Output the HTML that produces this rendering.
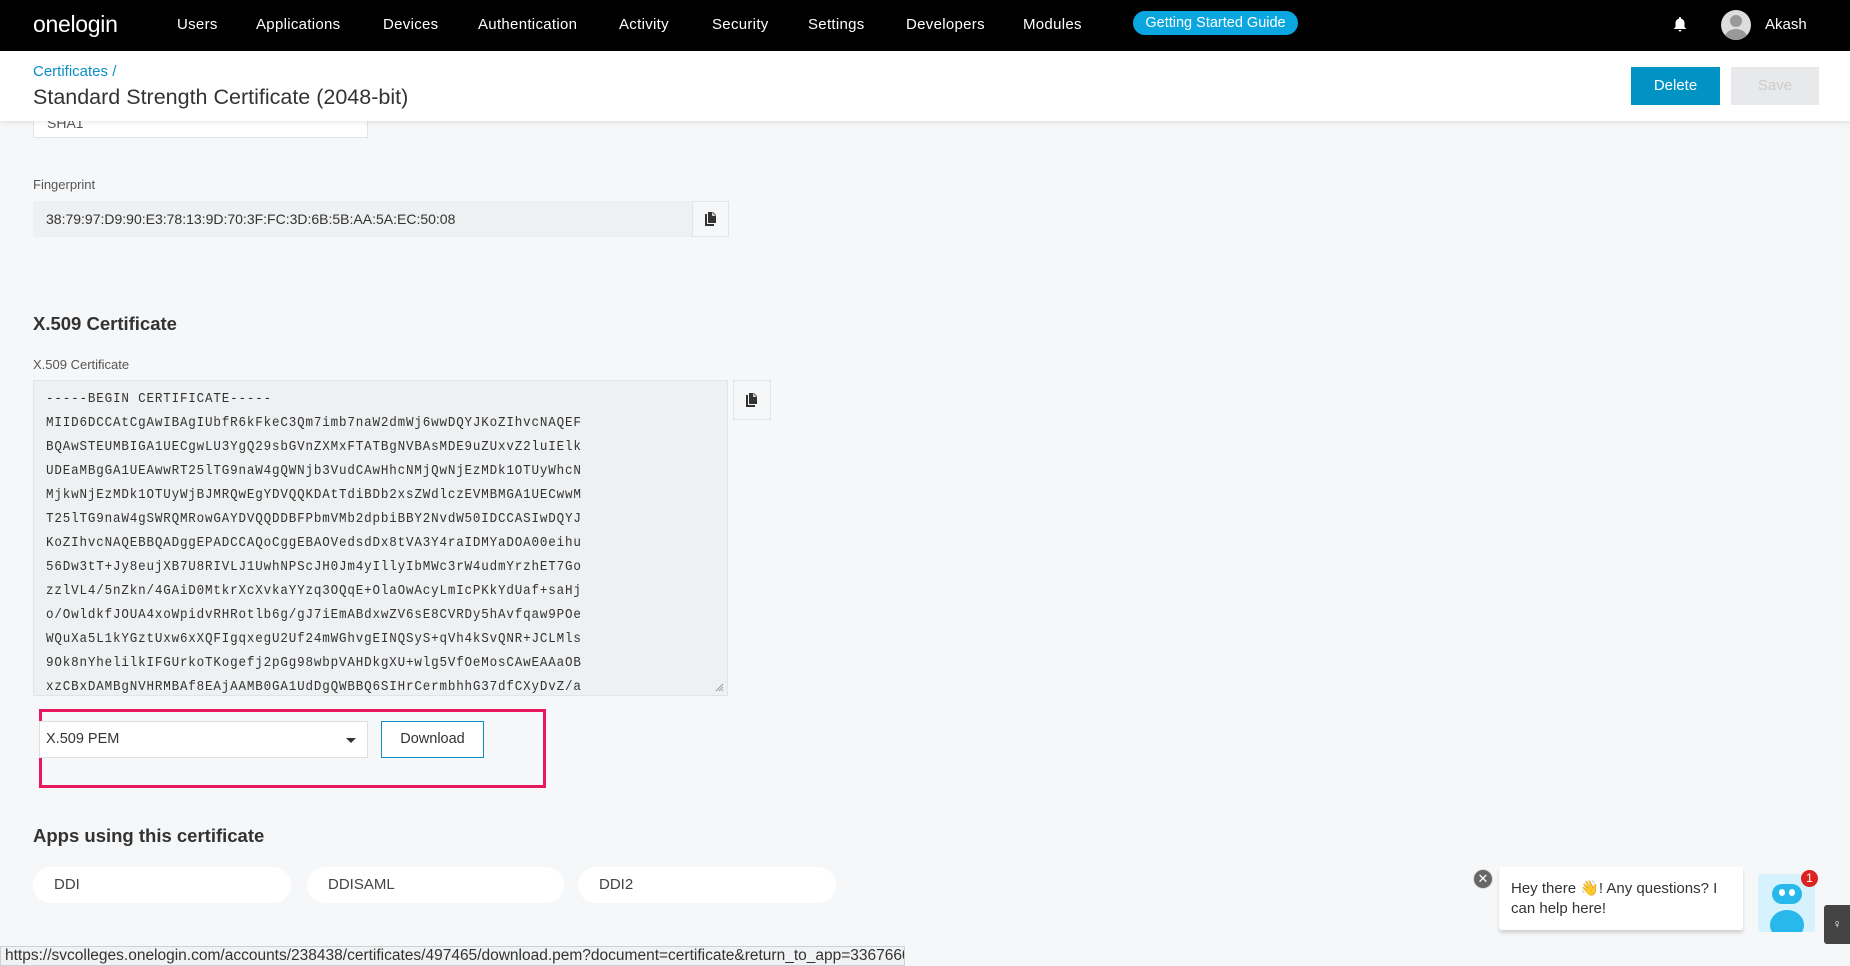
<!DOCTYPE html>
<html><head><meta charset="utf-8"><style>
*{box-sizing:border-box;margin:0;padding:0}
body{width:1850px;height:966px;overflow:hidden;background:#f6f7f8;font-family:"Liberation Sans",sans-serif;position:relative;color:#333}
.a{position:absolute}
.nav{left:0;top:0;width:1850px;height:51px;background:#000}
.nav span.n{position:absolute;top:16px;color:#fff;font-size:15px;letter-spacing:0.3px}
.hdr{left:0;top:51px;width:1850px;height:70px;background:#fff;box-shadow:0 2px 4px rgba(0,0,0,.08)}
.lines div{height:24px;line-height:24px;white-space:pre}
.btnc{background:#f6f7f8;border:1px solid #e2e4e6;display:flex;align-items:center;justify-content:center}
.pill{background:#fff;border-radius:18px;height:36px;line-height:36px;padding-left:21px;font-size:15px;color:#444}
</style></head><body>
<div class="a" style="left:33px;top:104px;width:335px;height:34px;background:#fff;border:1px solid #e2e4e6;font-size:14px;padding:10px 13px;color:#555;overflow:hidden">SHA1</div>
<div class="a nav">
<div class="a" style="left:33px;top:11px;color:#fff;font-size:23px;letter-spacing:-0.3px">onelogin</div>
<span class="n" style="left:177px">Users</span>
<span class="n" style="left:256px">Applications</span>
<span class="n" style="left:383px">Devices</span>
<span class="n" style="left:478px">Authentication</span>
<span class="n" style="left:619px">Activity</span>
<span class="n" style="left:712px">Security</span>
<span class="n" style="left:808px">Settings</span>
<span class="n" style="left:906px">Developers</span>
<span class="n" style="left:1023px">Modules</span>
<div class="a" style="left:1133px;top:11px;width:165px;height:24px;border-radius:12px;background:#0aa6e0;color:#fff;font-size:14.5px;line-height:24px;text-align:center">Getting Started Guide</div>
<svg class="a" style="left:1673px;top:16px" width="14" height="17" viewBox="0 0 14 17"><path d="M7 1c-.6 0-1 .4-1 1v.6C3.8 3.1 2.5 5 2.5 7v4L1 12.5V13h12v-.5L11.5 11V7c0-2-1.3-3.9-3.5-4.4V2c0-.6-.4-1-1-1zM5.5 14a1.5 1.5 0 003 0z" fill="#fff"/></svg>
<div class="a" style="left:1721px;top:10px;width:30px;height:30px;border-radius:50%;background:#ddd;overflow:hidden"><div class="a" style="left:9px;top:5px;width:12px;height:12px;border-radius:50%;background:#999"></div><div class="a" style="left:4px;top:19px;width:22px;height:16px;border-radius:50%;background:#999"></div></div>
<div class="a" style="left:1765px;top:16px;color:#fff;font-size:15px">Akash</div>
</div>
<div class="a hdr">
<div class="a" style="left:33px;top:12px;color:#0a8fc6;font-size:15px">Certificates /</div>
<div class="a" style="left:33px;top:34px;color:#333;font-size:21.5px">Standard Strength Certificate (2048-bit)</div>
<div class="a" style="left:1631px;top:16px;width:89px;height:38px;background:#0093c4;color:#fff;font-size:15px;line-height:38px;text-align:center">Delete</div>
<div class="a" style="left:1731px;top:16px;width:88px;height:38px;background:#e8e9ea;color:#ccc;font-size:15px;line-height:38px;text-align:center">Save</div>
</div>
<div class="a" style="left:33px;top:177px;font-size:13px;color:#555">Fingerprint</div>
<div class="a" style="left:33px;top:201px;width:659px;height:36px;background:#eef0f1;font-size:14px;line-height:36px;padding-left:13px;color:#333">38:79:97:D9:90:E3:78:13:9D:70:3F:FC:3D:6B:5B:AA:5A:EC:50:08</div>
<div class="a btnc" style="left:692px;top:201px;width:37px;height:36px">
<svg width="14" height="16" viewBox="0 0 14 16"><path d="M1 3h2v10h7v2H1z M4 1h5l3 3v8H4z" fill="#333"/><path d="M8 1v4h4" fill="#ccc"/></svg></div>
<div class="a" style="left:33px;top:313px;font-size:18.5px;font-weight:bold;color:#333">X.509 Certificate</div>
<div class="a" style="left:33px;top:357px;font-size:13px;color:#555">X.509 Certificate</div>
<div class="a" style="left:33px;top:380px;width:695px;height:316px;background:#eef0f1;border:1px solid #e2e4e6;overflow:hidden">
<div class="lines" style="position:absolute;left:12px;top:7px;font-family:'Liberation Mono',monospace;font-size:13.5px;letter-spacing:0.9px;color:#333;transform:scaleX(0.93);transform-origin:left">
<div>-----BEGIN CERTIFICATE-----</div>
<div>MIID6DCCAtCgAwIBAgIUbfR6kFkeC3Qm7imb7naW2dmWj6wwDQYJKoZIhvcNAQEF</div>
<div>BQAwSTEUMBIGA1UECgwLU3YgQ29sbGVnZXMxFTATBgNVBAsMDE9uZUxvZ2luIElk</div>
<div>UDEaMBgGA1UEAwwRT25lTG9naW4gQWNjb3VudCAwHhcNMjQwNjEzMDk1OTUyWhcN</div>
<div>MjkwNjEzMDk1OTUyWjBJMRQwEgYDVQQKDAtTdiBDb2xsZWdlczEVMBMGA1UECwwM</div>
<div>T25lTG9naW4gSWRQMRowGAYDVQQDDBFPbmVMb2dpbiBBY2NvdW50IDCCASIwDQYJ</div>
<div>KoZIhvcNAQEBBQADggEPADCCAQoCggEBAOVedsdDx8tVA3Y4raIDMYaDOA00eihu</div>
<div>56Dw3tT+Jy8eujXB7U8RIVLJ1UwhNPScJH0Jm4yIllyIbMWc3rW4udmYrzhET7Go</div>
<div>zzlVL4/5nZkn/4GAiD0MtkrXcXvkaYYzq3OQqE+OlaOwAcyLmIcPKkYdUaf+saHj</div>
<div>o/OwldkfJOUA4xoWpidvRHRotlb6g/gJ7iEmABdxwZV6sE8CVRDy5hAvfqaw9POe</div>
<div>WQuXa5L1kYGztUxw6xXQFIgqxegU2Uf24mWGhvgEINQSyS+qVh4kSvQNR+JCLMls</div>
<div>9Ok8nYhelilkIFGUrkoTKogefj2pGg98wbpVAHDkgXU+wlg5VfOeMosCAwEAAaOB</div>
<div>xzCBxDAMBgNVHRMBAf8EAjAAMB0GA1UdDgQWBBQ6SIHrCermbhhG37dfCXyDvZ/a</div>
</div>
<svg class="a" style="right:3px;bottom:3px" width="9" height="9"><path d="M8 1L1 8M8 4L4 8M8 7L7 8" stroke="#999"/></svg>
</div>
<div class="a btnc" style="left:733px;top:380px;width:38px;height:40px">
<svg width="14" height="16" viewBox="0 0 14 16"><path d="M1 3h2v10h7v2H1z M4 1h5l3 3v8H4z" fill="#333"/><path d="M8 1v4h4" fill="#ccc"/></svg></div>
<div class="a" style="left:39px;top:709px;width:507px;height:79px;border:3px solid #e8185e"></div>
<div class="a" style="left:39px;top:721px;width:329px;height:37px;background:#fff;border:1px solid #dcdfe2;font-size:14.5px;line-height:35px;padding-left:6px;color:#333">X.509 PEM
<div class="a" style="right:11px;top:16px;width:0;height:0;border-left:5px solid transparent;border-right:5px solid transparent;border-top:5px solid #333"></div></div>
<div class="a" style="left:381px;top:721px;width:103px;height:37px;background:#fff;border:1px solid #0a8fc6;font-size:14.5px;line-height:35px;text-align:center;color:#333">Download</div>
<div class="a" style="left:33px;top:825px;font-size:18.5px;font-weight:bold;color:#333">Apps using this certificate</div>
<div class="a pill" style="left:33px;top:867px;width:258px">DDI</div>
<div class="a pill" style="left:307px;top:867px;width:257px">DDISAML</div>
<div class="a pill" style="left:578px;top:867px;width:258px">DDI2</div>
<div class="a" style="left:0;top:946px;width:905px;height:20px;background:#f1f2f3;border:1px solid #cfd2d5;font-size:15.5px;line-height:18px;padding-left:4px;color:#333;white-space:nowrap;overflow:hidden">https://svcolleges.onelogin.com/accounts/238438/certificates/497465/download.pem?document=certificate&amp;return_to_app=3367660</div>
<div class="a" style="left:1474px;top:870px;width:18px;height:18px;border-radius:50%;background:#666;color:#fff;font-size:13px;line-height:18px;text-align:center;box-shadow:0 0 0 1px #ddd">✕</div>
<div class="a" style="left:1499px;top:867px;width:244px;height:63px;background:#fff;border-radius:3px;box-shadow:0 3px 3px rgba(0,0,0,.15);font-size:15px;line-height:20px;padding:12px 12px 0 12px;color:#333">Hey there 👋! Any questions? I can help here!</div>
<div class="a" style="left:1758px;top:874px;width:57px;height:58px;background:#d6f3fd;border-radius:3px;overflow:hidden">
<div class="a" style="left:14px;top:10px;width:30px;height:20px;border-radius:10px;background:#28b8ec"></div>
<div class="a" style="left:21px;top:15px;width:6px;height:7px;border-radius:50%;background:#fff"></div>
<div class="a" style="left:31px;top:15px;width:6px;height:7px;border-radius:50%;background:#fff"></div>
<div class="a" style="left:12px;top:36px;width:34px;height:30px;border-radius:50%;background:#28b8ec"></div>
</div>
<div class="a" style="left:1801px;top:870px;width:17px;height:17px;border-radius:50%;background:#d22;color:#fff;font-size:12px;line-height:17px;text-align:center">1</div>
<div class="a" style="left:1824px;top:905px;width:26px;height:39px;background:#444;border-radius:3px 0 0 3px;color:#fff;font-size:12px;line-height:39px;text-align:center">♀</div>
</body></html>
